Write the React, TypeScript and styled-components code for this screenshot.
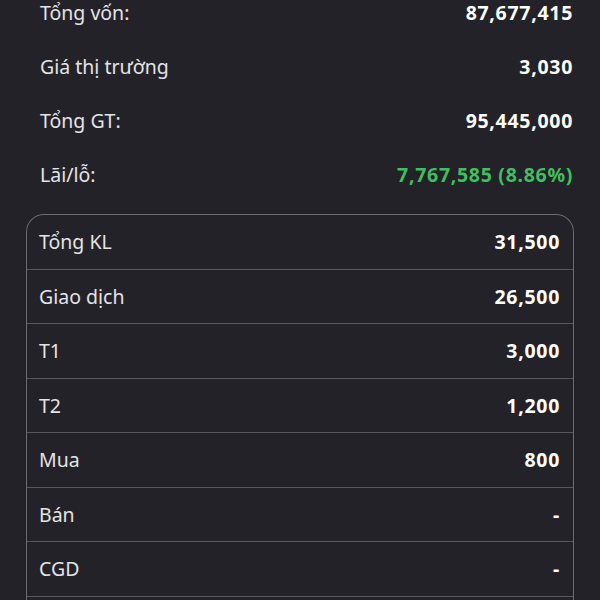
import React from "react";
import styled, { createGlobalStyle } from "styled-components";

const Global = createGlobalStyle`
  html, body { margin: 0; padding: 0; background: #232228; }
  body { font-family: "Noto Sans", "Open Sans", sans-serif; overflow: hidden; }
`;

const Page = styled.div`
  width: 600px;
  height: 600px;
  background: #232228;
  box-sizing: border-box;
  padding: 0 26px;
  overflow: hidden;
`;

const Summary = styled.div`
  display: flex;
  flex-direction: column;
  margin-top: -15px;
  padding: 0 1px 0 14px;
`;

const SummaryRow = styled.div`
  display: flex;
  align-items: center;
  justify-content: space-between;
  height: 54px;
`;

const Label = styled.span`
  color: #e4e4e6;
  font-size: 19.5px;
  font-weight: 400;
`;

const Value = styled.span<{ $tone?: "green" }>`
  color: ${(p) => (p.$tone === "green" ? "#3fbf5f" : "#ffffff")};
  font-size: 19.5px;
  font-weight: 700;
  letter-spacing: 0.7px;
`;

const Table = styled.div`
  margin-top: 13px;
  border: 1.5px solid #6c6b70;
  border-bottom: none;
  border-radius: 18px 18px 0 0;
  padding-bottom: 30px;
  display: flex;
  flex-direction: column;
`;

const TableRow = styled.div`
  display: flex;
  align-items: center;
  justify-content: space-between;
  height: 53.5px;
  padding: 0 13px 0 12px;
  border-bottom: 1.5px solid #58575c;
`;

const summary: { label: string; value: string; tone?: "green" }[] = [
  { label: "Tổng vốn:", value: "87,677,415" },
  { label: "Giá thị trường", value: "3,030" },
  { label: "Tổng GT:", value: "95,445,000" },
  { label: "Lãi/lỗ:", value: "7,767,585 (8.86%)", tone: "green" },
];

const rows = [
  { label: "Tổng KL", value: "31,500" },
  { label: "Giao dịch", value: "26,500" },
  { label: "T1", value: "3,000" },
  { label: "T2", value: "1,200" },
  { label: "Mua", value: "800" },
  { label: "Bán", value: "-" },
  { label: "CGD", value: "-" },
];

export default function App() {
  return (
    <>
      <Global />
      <Page>
        <Summary>
          {summary.map((s) => (
            <SummaryRow key={s.label}>
              <Label>{s.label}</Label>
              <Value $tone={s.tone}>{s.value}</Value>
            </SummaryRow>
          ))}
        </Summary>
        <Table>
          {rows.map((r) => (
            <TableRow key={r.label}>
              <Label>{r.label}</Label>
              <Value>{r.value}</Value>
            </TableRow>
          ))}
        </Table>
      </Page>
    </>
  );
}
